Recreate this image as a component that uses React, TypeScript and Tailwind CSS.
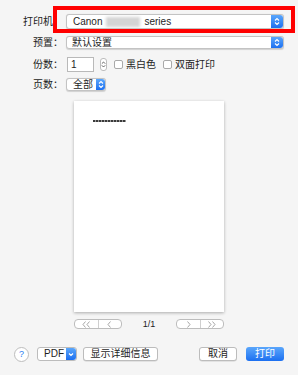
import React from 'react';

const font = "font-['Liberation_Sans','Noto_Sans_CJK_SC',sans-serif]";

// small up/down arrows used by the popup buttons
const UpDown = ({ color = 'white' }: { color?: string }) => (
  <svg width="6" height="9" viewBox="0 0 6 9" fill="none">
    <polyline points="1,3.5 3,1.5 5,3.5" stroke={color} strokeWidth="1.1" />
    <polyline points="1,5.5 3,7.5 5,5.5" stroke={color} strokeWidth="1.1" />
  </svg>
);

const Down = () => (
  <svg width="6" height="5" viewBox="0 0 6 5" fill="none">
    <polyline points="1,1.5 3,3.5 5,1.5" stroke="white" strokeWidth="1.2" />
  </svg>
);

// page navigation chevrons: dir -1 = left, 1 = right; n = 1 or 2 chevrons
const Chev = ({ dir, n }: { dir: 1 | -1; n: 1 | 2 }) => (
  <svg width={n === 2 ? 9 : 5} height="7" viewBox={n === 2 ? '0 0 9 7' : '0 0 5 7'} fill="none">
    {dir === -1 ? (
      <>
        <polyline points="3.5,0.5 1,3.5 3.5,6.5" stroke="#9c9c9c" strokeWidth="0.9" />
        {n === 2 && <polyline points="7.5,0.5 5,3.5 7.5,6.5" stroke="#9c9c9c" strokeWidth="0.9" />}
      </>
    ) : (
      <>
        <polyline points="1.5,0.5 4,3.5 1.5,6.5" stroke="#9c9c9c" strokeWidth="0.9" />
        {n === 2 && <polyline points="5.5,0.5 8,3.5 5.5,6.5" stroke="#9c9c9c" strokeWidth="0.9" />}
      </>
    )}
  </svg>
);

const BlueCap = ({ w, children }: { w: string; children: React.ReactNode }) => (
  <div className={`${w} self-stretch flex items-center justify-center rounded-r-[3px] bg-gradient-to-b from-[#5aa6fb] to-[#1b6ff0]`}>
    {children}
  </div>
);

const Label = ({ text }: { text: string }) => (
  <div className="w-[63px] text-right shrink-0 text-[#222]">{text}</div>
);

const Checkbox = ({ text }: { text: string }) => (
  <div className="flex items-center gap-[3px]">
    <div className="w-[9px] h-[9px] rounded-[2px] border border-[#a9a9a9] bg-white" />
    <span>{text}</span>
  </div>
);

const NavPair = ({ left, right }: { left: React.ReactNode; right: React.ReactNode }) => (
  <div className="w-[48px] h-[10px] flex rounded-[4px] border border-[#bdbdbd] bg-white">
    <div className="flex-1 flex items-center justify-center border-r border-[#cfcfcf]">{left}</div>
    <div className="flex-1 flex items-center justify-center">{right}</div>
  </div>
);

const Button = ({ text, w }: { text: string; w: string }) => (
  <div className={`${w} h-[14px] flex items-center justify-center rounded-[3px] border border-[#bcbcbc] bg-white shadow-[0_0.5px_0.5px_rgba(0,0,0,0.15)]`}>
    {text}
  </div>
);

export default function App() {
  return (
    <div className={`w-[298px] h-[375px] bg-[#f5f5f5] flex flex-col text-[10px] leading-none text-[#1e1e1e] ${font}`}>
      {/* printer */}
      <div className="relative flex items-center mt-[14px] h-[15px]">
        <Label text="打印机：" />
        <div className="ml-[3px] w-[218px] h-[15px] flex items-center rounded-[3px] border border-[#c3c3c3] bg-white shadow-[0_0.5px_1px_rgba(0,0,0,0.15)]">
          <div className="flex-1 flex items-center pl-[6px]">
            <span>Canon</span>
            <span className="inline-block mx-[4px] w-[34px] h-[10px] bg-[#d4d4d4] blur-[1.5px]" />
            <span>series</span>
          </div>
          <BlueCap w="w-[12px]"><UpDown /></BlueCap>
        </div>
        <div className="absolute left-[53px] top-[-8px] w-[242px] h-[27px] border-4 border-[#ff0000]" />
      </div>

      {/* preset */}
      <div className="flex items-center mt-[7px] h-[13px]">
        <Label text="预置：" />
        <div className="ml-[3px] w-[218px] h-[13px] flex items-center rounded-[3px] border border-[#c3c3c3] bg-white shadow-[0_0.5px_1px_rgba(0,0,0,0.15)]">
          <div className="flex-1 pl-[5px]">默认设置</div>
          <BlueCap w="w-[12px]"><UpDown /></BlueCap>
        </div>
      </div>

      {/* copies */}
      <div className="flex items-center mt-[8px] h-[15px]">
        <Label text="份数：" />
        <div className="ml-[4px] w-[27px] h-[15px] flex items-center pl-[3px] border border-[#b9b9b9] bg-white">1</div>
        <div className="ml-[6px] w-[7px] h-[13px] flex items-center justify-center rounded-[3px] border border-[#bdbdbd] bg-white">
          <UpDown color="#555" />
        </div>
        <div className="ml-[7px] flex items-center gap-[7px]">
          <Checkbox text="黑白色" />
          <Checkbox text="双面打印" />
        </div>
      </div>

      {/* pages */}
      <div className="flex items-center mt-[6px] h-[13px]">
        <Label text="页数：" />
        <div className="ml-[3px] w-[40px] h-[13px] flex items-center rounded-[3px] border border-[#c3c3c3] bg-white shadow-[0_0.5px_1px_rgba(0,0,0,0.15)]">
          <div className="flex-1 pl-[6px]">全部</div>
          <BlueCap w="w-[9px]"><UpDown /></BlueCap>
        </div>
      </div>

      {/* preview */}
      <div className="mt-[10px] mx-auto w-[150px] h-[211px] bg-white shadow-[0_1px_3px_rgba(0,0,0,0.3)] pt-[19px] pl-[19px]">
        <div className="w-[33px] h-[1.5px] bg-[repeating-linear-gradient(90deg,#3a3a3a_0_2px,#9a9a9a_2px_3px)]" />
      </div>

      {/* page nav */}
      <div className="mt-[7px] h-[10px] flex items-center justify-center">
        <NavPair left={<Chev dir={-1} n={2} />} right={<Chev dir={-1} n={1} />} />
        <div className="w-[54px] text-center text-[9px] text-[#222]">1/1</div>
        <NavPair left={<Chev dir={1} n={1} />} right={<Chev dir={1} n={2} />} />
      </div>

      {/* bottom bar */}
      <div className="mt-[18px] h-[14px] flex items-center pl-[14px] pr-[14px]">
        <div className="w-[15px] h-[15px] rounded-full border border-[#bdbdbd] bg-white flex items-center justify-center text-[#2a7ef2] text-[9px]">?</div>
        <div className="ml-[8px] w-[40px] h-[14px] flex items-center rounded-[3px] border border-[#bcbcbc] bg-white">
          <div className="flex-1 pl-[6px]">PDF</div>
          <BlueCap w="w-[10px]"><Down /></BlueCap>
        </div>
        <div className="ml-[6px]"><Button text="显示详细信息" w="w-[75px]" /></div>
        <div className="ml-auto"><Button text="取消" w="w-[38px]" /></div>
        <div className="ml-[9px] w-[38px] h-[14px] flex items-center justify-center rounded-[3px] bg-gradient-to-b from-[#5aa6fb] to-[#1b6ff0] text-white">打印</div>
      </div>
    </div>
  );
}
